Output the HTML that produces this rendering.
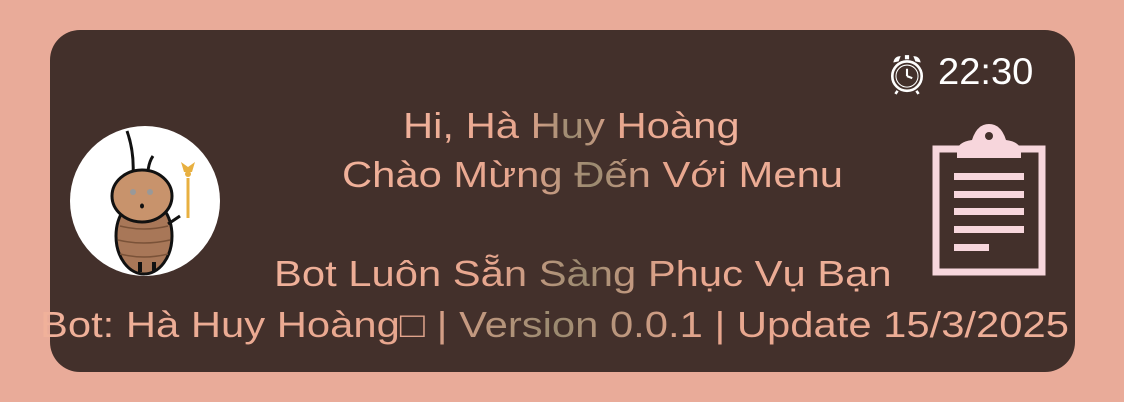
<!DOCTYPE html>
<html><head><meta charset="utf-8"><style>
html,body{margin:0;padding:0;width:1124px;height:402px;overflow:hidden;background:#e9ab99;font-family:"Liberation Sans","Noto Sans CJK SC",sans-serif;}
.bg{position:absolute;inset:0;background:radial-gradient(ellipse 300px 200px at 520px 230px,#c88a7a,#e9ab99 70%);}
.card{position:absolute;left:50px;top:30px;width:1025px;height:342px;border-radius:30px;background:#43302b;overflow:visible;}
.t{position:absolute;white-space:nowrap;font-size:36px;line-height:40px;color:#e8a38c;transform:scaleX(1.16);transform-origin:0 0;
background:linear-gradient(90deg,#f0b19a 0%,#e7a68e 35%,#9a8a70 50%,#e7a68e 65%,#f0b19a 100%);-webkit-background-clip:text;background-clip:text;-webkit-text-fill-color:transparent;}
.avatar{position:absolute;left:70px;top:126px;width:150px;height:150px;border-radius:50%;background:#fff;overflow:hidden;}
</style></head><body>
<div class="bg"></div>
<div class="card"></div>
<div class="avatar"><svg width="150" height="150" viewBox="0 0 150 150">
<path d="M62 60 Q66 30 57 5" stroke="#111" stroke-width="3" fill="none"/>
<path d="M78 62 Q76 40 83 30" stroke="#111" stroke-width="3" fill="none"/>
<ellipse cx="74" cy="110" rx="28" ry="38" fill="#a87758" stroke="#111" stroke-width="3"/>
<path d="M50 100 Q74 106 98 100 M48 114 Q74 120 100 114 M50 128 Q74 134 98 128" stroke="#7a5238" stroke-width="1.5" fill="none"/>
<ellipse cx="72" cy="70" rx="30" ry="26" fill="#c8936c" stroke="#111" stroke-width="3"/>
<circle cx="63" cy="66" r="3" fill="#999"/><circle cx="80" cy="66" r="3" fill="#999"/>
<ellipse cx="72" cy="80" rx="2" ry="2.5" fill="#111"/>
<path d="M98 98 L110 90" stroke="#111" stroke-width="3"/>
<path d="M118 52 L118 92" stroke="#e8b040" stroke-width="3"/>
<path d="M111 36 L114 46 L122 46 L125 36 L118 41 Z" fill="#e8b040"/>
<circle cx="118" cy="48" r="3" fill="#e8b040"/>
<path d="M70 146 L70 136 M84 146 L84 136" stroke="#111" stroke-width="4"/>
</svg></div>
<svg style="position:absolute;left:888px;top:53px" width="38" height="42" viewBox="0 0 36 40">
<path d="M5 9 Q6 3 12 3 L10 8 Z M31 9 Q30 3 24 3 L26 8 Z" fill="#fff"/>
<circle cx="18" cy="22" r="14" fill="none" stroke="#fff" stroke-width="2.5"/>
<circle cx="18" cy="22" r="10.5" fill="none" stroke="#fff" stroke-width="1"/>
<path d="M18 22 L18 15 M18 22 L23 24" stroke="#fff" stroke-width="2"/>
<path d="M9 36 L7 39 M27 36 L29 39" stroke="#fff" stroke-width="2.5"/>
<rect x="16" y="2" width="4" height="4" fill="#fff"/>
</svg>
<div style="position:absolute;left:938px;top:52px;font-size:37px;line-height:40px;color:#fff;transform:scaleX(1.03);transform-origin:0 0;">22:30</div>
<svg style="position:absolute;left:932px;top:122px" width="116" height="156" viewBox="0 0 116 156">
<rect x="4" y="27" width="106" height="123" fill="none" stroke="#f7d6dc" stroke-width="7"/>
<path d="M25 36 L25 30 Q25 20 40 18 Q45 2 57 2 Q69 2 74 18 Q89 20 89 30 L89 36 Z" fill="#f7d6dc"/>
<circle cx="57" cy="14" r="4" fill="#43302b"/>
<g fill="#f7d6dc"><rect x="22" y="51" width="70" height="7"/><rect x="22" y="69" width="70" height="7"/><rect x="22" y="86" width="70" height="7"/><rect x="22" y="104" width="70" height="7"/><rect x="22" y="122" width="35" height="7"/></g>
</svg>
<div class="t" style="left:403px;top:106px;">Hi, Hà Huy Hoàng</div>
<div class="t" style="left:342px;top:155px;">Chào Mừng Đến Với Menu</div>
<div class="t" style="left:274px;top:254px;">Bot Luôn Sẵn Sàng Phục Vụ Bạn</div>
<div class="t" style="left:40px;top:305px;">Bot: Hà Huy Hoàng□ | Version 0.0.1 | Update 15/3/2025</div>
</body></html>
